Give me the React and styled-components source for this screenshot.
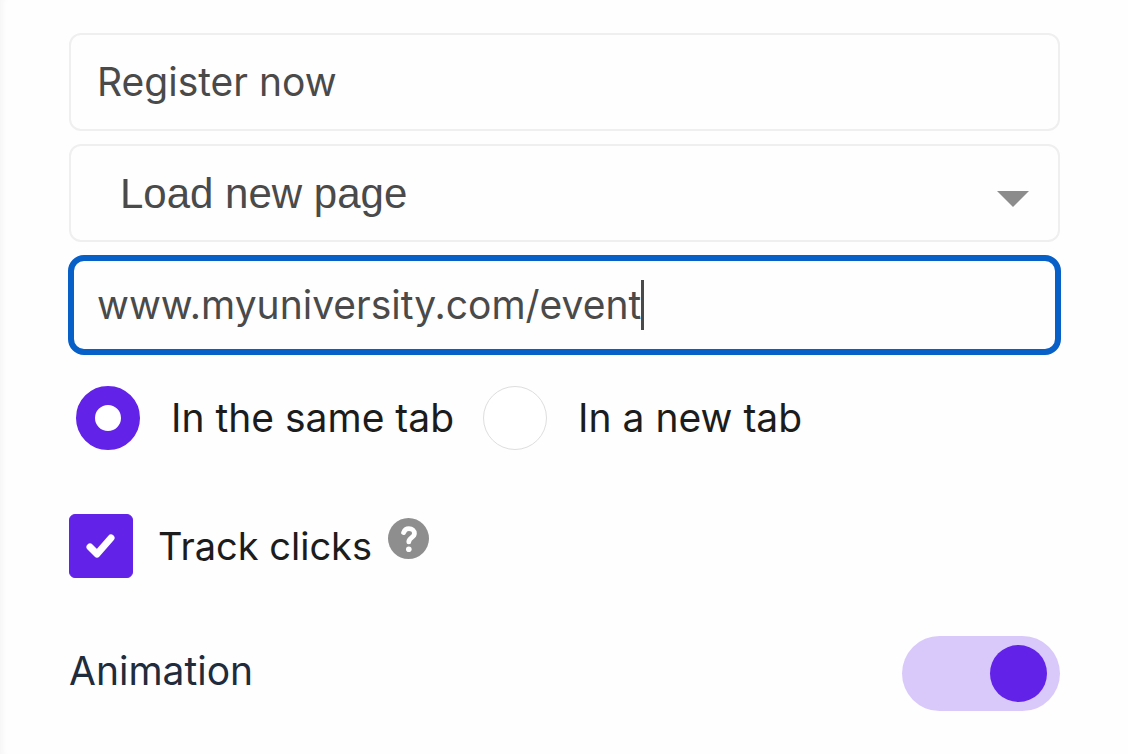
import React, { useState } from 'react';
import styled, { createGlobalStyle } from 'styled-components';

const App = () => {
  const [label, setLabel] = useState('Register now');
  const [action, setAction] = useState('load');
  const [url, setUrl] = useState('www.myuniversity.com/event');
  const [target, setTarget] = useState('same');
  const [track, setTrack] = useState(true);
  const [animation, setAnimation] = useState(true);

  return (
    <>
      <GlobalStyle />
      <Panel>
        <Fields>
          <Field>
            <TextInput
              aria-label="Button text"
              value={label}
              onChange={(e) => setLabel(e.target.value)}
            />
          </Field>
          <Field>
            <Select
              aria-label="Button action"
              value={action}
              onChange={(e) => setAction(e.target.value)}
            >
              <option value="load">Load new page</option>
            </Select>
            <Arrow viewBox="0 0 32 16" aria-hidden="true">
              <path d="M0 0h32L16 16z" />
            </Arrow>
          </Field>
          <Field $active>
            <TextInput
              $hug
              aria-label="Page address"
              value={url}
              onChange={(e) => setUrl(e.target.value)}
            />
            <Caret />
          </Field>
        </Fields>

        <RadioGroup role="radiogroup" aria-label="Open page">
          <Option>
            <Radio
              name="target"
              checked={target === 'same'}
              onChange={() => setTarget('same')}
            />
            In the same tab
          </Option>
          <Option>
            <Radio
              name="target"
              checked={target === 'new'}
              onChange={() => setTarget('new')}
            />
            In a new tab
          </Option>
        </RadioGroup>

        <TrackRow>
          <CheckLabel>
            <CheckSlot>
              <Checkbox checked={track} onChange={(e) => setTrack(e.target.checked)} />
              {track && (
                <Tick viewBox="0 0 64 64" aria-hidden="true">
                  <path d="M21 33l7 7L42 24" />
                </Tick>
              )}
            </CheckSlot>
            Track clicks
          </CheckLabel>
          <HelpButton type="button" aria-label="Help">
            <HelpIcon viewBox="0 0 41 41" aria-hidden="true">
              <circle cx="20.5" cy="20.5" r="20.5" fill="#8e8e8e" />
              <path
                d="M15.6 14.6c.9-2.4 2.6-3.9 5.3-3.9 3.3 0 5.5 1.9 5.5 4.8 0 4.1-5.6 4.2-5.6 8.4"
                fill="none"
                stroke="#fff"
                strokeWidth="4.8"
                strokeLinecap="round"
              />
              <circle cx="20.8" cy="31.2" r="2.8" fill="#fff" />
            </HelpIcon>
          </HelpButton>
        </TrackRow>

        <SwitchRow>
          Animation
          <Switch
            role="switch"
            checked={animation}
            onChange={(e) => setAnimation(e.target.checked)}
          />
        </SwitchRow>
      </Panel>
    </>
  );
};

export default App;

const GlobalStyle = createGlobalStyle`
  * {
    box-sizing: border-box;
  }
  body {
    margin: 0;
    background: #fefefe;
  }
`;

const Panel = styled.form`
  min-height: 100vh;
  padding: 33px 68px 42px 69px;
  box-shadow: inset 6px 0 6px -4px #f4f4f4;
  font-family: Inter, sans-serif;
  font-size: 39px;
  line-height: 48px;
  color: #1c1c1c;
`;

const Fields = styled.div`
  display: grid;
  gap: 13px;
`;

const Field = styled.div`
  display: grid;
  grid-template-columns: ${(p) => (p.$active ? 'auto 1fr' : '1fr')};
  align-items: center;
  min-height: 98px;
  border: 2px solid #efefef;
  border-radius: 12px;
  color: #4a4a4a;
  ${(p) =>
    p.$active &&
    `
    min-height: 100px;
    margin: 0 -1px;
    padding-left: 23px;
    border: 6px solid #075fc8;
    border-radius: 16px;
  `}
`;

const TextInput = styled.input`
  min-width: 0;
  padding: ${(p) => (p.$hug ? '0' : '0 26px')};
  border: 0;
  outline: 0;
  background: none;
  font: inherit;
  color: inherit;
  ${(p) => p.$hug && 'field-sizing: content;'}
`;

const Select = styled.select`
  grid-area: 1 / 1;
  width: 100%;
  height: 94px;
  padding: 0 80px 0 49px;
  border: 0;
  outline: 0;
  appearance: none;
  background: none;
  font-family: 'Liberation Sans', sans-serif;
  font-size: 42px;
  color: inherit;
`;

const Arrow = styled.svg`
  grid-area: 1 / 1;
  justify-self: end;
  width: 32px;
  height: 16px;
  margin: 12px 29px 0 0;
  fill: #8c8c8c;
  pointer-events: none;
`;

const Caret = styled.span`
  width: 3px;
  height: 50px;
  background: #4a4a4a;
`;

const RadioGroup = styled.div`
  display: flex;
  flex-wrap: wrap;
  gap: 29px;
  margin: 31px 0 0 7px;
`;

const Option = styled.label`
  display: flex;
  align-items: center;
  gap: 31px;
`;

const Radio = styled.input.attrs({ type: 'radio' })`
  width: 64px;
  height: 64px;
  margin: 0;
  appearance: none;
  border: 1px solid #dedede;
  border-radius: 50%;
  background: #fff;
  &:checked {
    border: 19px solid #6222e8;
  }
`;

const TrackRow = styled.div`
  display: flex;
  align-items: center;
  gap: 16px;
  margin-top: 64px;
`;

const CheckLabel = styled.label`
  display: flex;
  align-items: center;
  gap: 25px;
  font-size: 38px;
`;

const CheckSlot = styled.span`
  display: grid;
`;

const Checkbox = styled.input.attrs({ type: 'checkbox' })`
  grid-area: 1 / 1;
  width: 64px;
  height: 64px;
  margin: 0;
  appearance: none;
  border: 1px solid #dedede;
  border-radius: 6px;
  &:checked {
    border-color: #6222e8;
    background: #6222e8;
  }
`;

const Tick = styled.svg`
  grid-area: 1 / 1;
  width: 64px;
  height: 64px;
  fill: none;
  stroke: #fff;
  stroke-width: 7;
  stroke-linecap: round;
  stroke-linejoin: round;
  pointer-events: none;
`;

const HelpButton = styled.button`
  display: flex;
  margin-bottom: 16px;
  padding: 0;
  border: 0;
  background: none;
`;

const HelpIcon = styled.svg`
  width: 41px;
  height: 41px;
`;

const SwitchRow = styled.label`
  display: flex;
  justify-content: space-between;
  margin-top: 58px;
  line-height: 70px;
  color: #1f2c3d;
`;

const Switch = styled.input.attrs({ type: 'checkbox' })`
  display: flex;
  align-items: center;
  width: 158px;
  height: 75px;
  margin: 0;
  padding: 0 13px;
  appearance: none;
  border-radius: 38px;
  background: #e2e2e2;
  &::before {
    content: '';
    width: 57px;
    height: 57px;
    border-radius: 50%;
    background: #8e8e8e;
  }
  &:checked {
    justify-content: flex-end;
    background: #d9c8fa;
  }
  &:checked::before {
    background: #6222e8;
  }
`;
